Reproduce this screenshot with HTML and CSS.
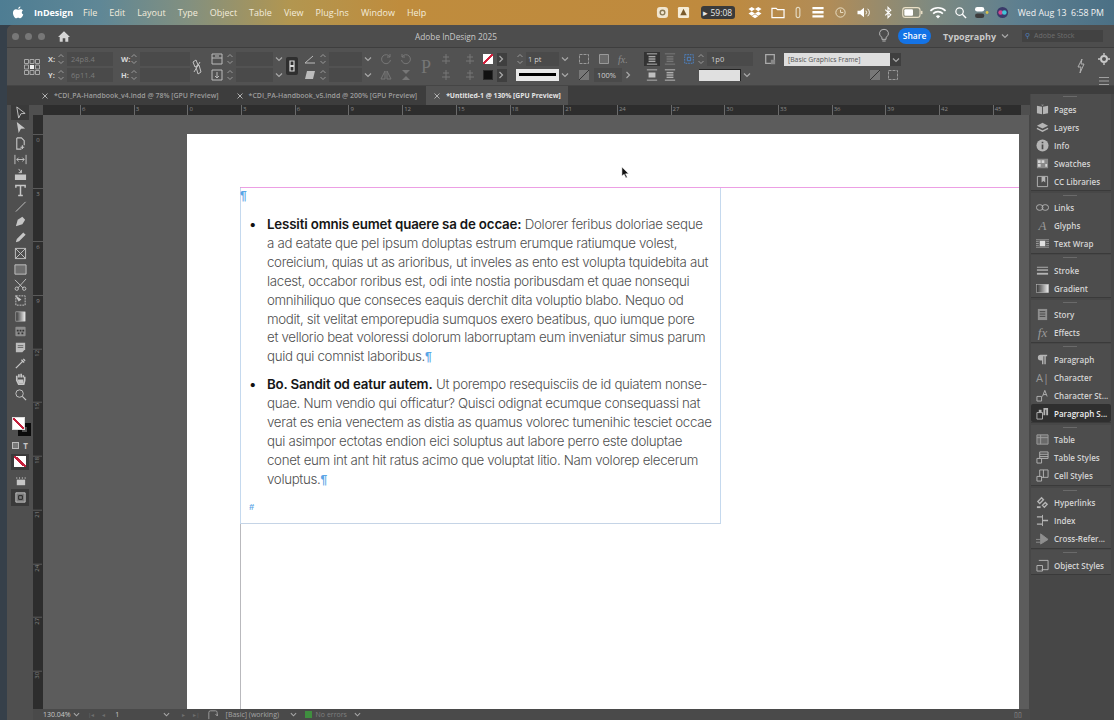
FILE: index.html
```html
<!DOCTYPE html>
<html lang="en">
<head>
    <meta charset="UTF-8" />
    <meta name="viewport" content="width=device-width, initial-scale=1.0" />
    <title>Adobe InDesign 2025</title>
    <link rel="stylesheet" href="styles.css">
</head>
<body>
    <svg class="sprite" width="0" height="0">
        <symbol id="spin" viewBox="0 0 8 14"><path d="M1.5 5 4 2.5 6.5 5M1.5 9 4 11.5 6.5 9" fill="none" stroke="currentColor"/></symbol>
        <symbol id="chev" viewBox="0 0 8 8"><path d="M1 2.5 4 5.5 7 2.5" fill="none" stroke="currentColor" stroke-width="1.2"/></symbol>
        <symbol id="next" viewBox="0 0 8 8"><path d="M2.5 1 5.5 4 2.5 7" fill="none" stroke="currentColor" stroke-width="1.2"/></symbol>
        <symbol id="close" viewBox="0 0 8 8"><path d="M1.5 1.5 6.5 6.5M6.5 1.5 1.5 6.5" stroke="currentColor"/></symbol>

        <symbol id="t-select" viewBox="0 0 14 14"><path d="M3 1 12 8 7.500 8.300 5 13Z" fill="none" stroke="currentColor"/></symbol>
        <symbol id="t-direct" viewBox="0 0 14 14"><path d="M3 1 12 8 7.500 8.300 5 13Z" fill="currentColor"/></symbol>
        <symbol id="t-page" viewBox="0 0 14 14"><path d="M3 1H8L11 4V9M3 1V13H8M9 9V13M7 11H11" fill="none" stroke="currentColor" stroke-width="1.200"/></symbol>
        <symbol id="t-gap" viewBox="0 0 14 14"><path d="M1 2V12M13 2V12M3 7H11M3 7 5 5M3 7 5 9M11 7 9 5M11 7 9 9" fill="none" stroke="currentColor"/></symbol>
        <symbol id="t-collect" viewBox="0 0 14 14"><path d="M1 7H13V13H1Z" fill="currentColor"/><path d="M5 1 8 5M8 2V5H5" fill="none" stroke="currentColor"/></symbol>
        <symbol id="t-type" viewBox="0 0 14 14"><path d="M2 4V1.500H12V4M7 1.500V12.500M4.500 12.500H9.500" fill="none" stroke="currentColor" stroke-width="1.600"/></symbol>
        <symbol id="t-line" viewBox="0 0 14 14"><path d="M2 12.500 12.500 2" stroke="currentColor"/></symbol>
        <symbol id="t-pen" viewBox="0 0 14 14"><path d="M2 12 4 5 9 2 12 5 9 10Z" fill="currentColor"/></symbol>
        <symbol id="t-pencil" viewBox="0 0 14 14"><path d="M2 12 3 8.500 10 1.500 12.500 4 5.500 11Z" fill="currentColor"/></symbol>
        <symbol id="t-frame" viewBox="0 0 14 14"><path d="M1.500 1.500H12.500V12.500H1.500ZM1.500 1.500 12.500 12.500M12.500 1.500 1.500 12.500" fill="none" stroke="currentColor"/></symbol>
        <symbol id="t-rect" viewBox="0 0 14 14"><path d="M1 2H13V12H1Z" fill="#6f6f6f" stroke="currentColor"/></symbol>
        <symbol id="t-scissors" viewBox="0 0 14 14"><path d="M1 2 10 11M13 1 4 11" stroke="currentColor"/><circle cx="3" cy="11.500" r="1.800" fill="none" stroke="currentColor"/><circle cx="11" cy="11.500" r="1.800" fill="none" stroke="currentColor"/></symbol>
        <symbol id="t-transform" viewBox="0 0 14 14"><path d="M2 2H12V12H2Z" fill="none" stroke="currentColor" stroke-dasharray="2 1"/><path d="M1 1 8 6 5 8Z" fill="currentColor"/></symbol>
        <symbol id="t-gradient" viewBox="0 0 14 14"><rect x="2" y="2" width="10" height="10" fill="url(#grad)" stroke="currentColor" stroke-width=".6"/></symbol>
        <linearGradient id="grad"><stop offset="0" stop-color="#333"/><stop offset="1" stop-color="#eee"/></linearGradient>
        <symbol id="t-feather" viewBox="0 0 14 14"><rect x="1.500" y="2" width="11" height="10" rx="1" fill="#8d8d8d"/><path d="M3 5h2v2H3zM6 5h2v2H6zM9 5h2v2H9zM4 8h2v2H4zM8 8h2v2H8z" fill="#333"/></symbol>
        <symbol id="t-note" viewBox="0 0 14 14"><path d="M2 2H12V9L9 12H2Z" fill="#bdbdbd"/><path d="M4 5H10M4 7H10" stroke="#666"/></symbol>
        <symbol id="t-drop" viewBox="0 0 14 14"><path d="M2 12 9 5M8 3 11 6M10 2 12 4" fill="none" stroke="currentColor" stroke-width="1.400"/></symbol>
        <symbol id="t-hand" viewBox="0 0 14 14"><path d="M3 7V4M5.300 6V2.500M7.700 6V2M10 6V3.500M3 7 3 9 5 13H10.500L11.500 9V5" fill="none" stroke="currentColor" stroke-width="1.800"/><path d="M4 8H10V12H5Z" fill="currentColor"/></symbol>
        <symbol id="t-zoom" viewBox="0 0 14 14"><circle cx="6" cy="6" r="4" fill="none" stroke="currentColor"/><path d="M9 9 13 13" stroke="currentColor" stroke-width="1.300"/></symbol>
        <symbol id="t-preview" viewBox="0 0 14 14"><path d="M3 5H12V11H3Z" fill="currentColor"/><path d="M3 2.500V4M6 2.500V4M9 2.500V4M12 2.500V4" stroke="currentColor"/></symbol>
        <symbol id="t-mode" viewBox="0 0 14 14"><path d="M2 2H12V12H2Z" fill="#7b7b7b" stroke="currentColor"/><path d="M5 5H9V9H5Z" fill="none" stroke="#222"/></symbol>

        <symbol id="p-pages" viewBox="0 0 14 12"><path d="M1 2 6.500 3V11L1 10ZM13 2 7.500 3V11L13 10ZM5.500 1 7 2 8.500 1" fill="currentColor"/></symbol>
        <symbol id="p-layers" viewBox="0 0 14 12"><path d="M7 1 13 4 7 7 1 4Z" fill="currentColor"/><path d="M1 7 7 10 13 7" fill="none" stroke="currentColor" stroke-width="1.500"/></symbol>
        <symbol id="p-info" viewBox="0 0 14 14"><circle cx="7" cy="7" r="6.500" fill="currentColor"/><path d="M7 6V11M7 3V4.500" stroke="#4a4a4a" stroke-width="1.800"/></symbol>
        <symbol id="p-swatches" viewBox="0 0 14 12"><path d="M1 1H13V11H1Z" fill="#8a8a8a"/><path d="M2 2.500H5V5.500H2ZM6 2.500H9V5.500H6ZM10 6.500H12V9.500H10ZM2 6.500H5V9.500H2Z" fill="#d5d5d5"/></symbol>
        <symbol id="p-cc" viewBox="0 0 14 14"><path d="M1.500 1.500H12.500V12.500H1.500Z" fill="none" stroke="currentColor"/><path d="M6 2H10V8L8 6.500 6 8Z" fill="currentColor"/></symbol>
        <symbol id="p-links" viewBox="0 0 14 8"><rect x=".5" y="1" width="7" height="6" rx="3" fill="none" stroke="currentColor"/><rect x="6.500" y="1" width="7" height="6" rx="3" fill="none" stroke="currentColor"/></symbol>
        <symbol id="p-wrap" viewBox="0 0 14 12"><path d="M0 2H14M0 10H14M0 6H3M11 6H14M0 4H3M11 4H14M0 8H3M11 8H14" stroke="#9a9a9a"/><path d="M4 3H10V9H4Z" fill="#e0e0e0"/></symbol>
        <symbol id="p-stroke" viewBox="0 0 14 10"><path d="M1 1.500H13" stroke="currentColor"/><path d="M1 4.500H13" stroke="currentColor" stroke-width="1.500"/><path d="M1 8.500H13" stroke="currentColor" stroke-width="2"/></symbol>
        <symbol id="p-gradient" viewBox="0 0 14 10"><rect x=".5" y=".5" width="13" height="9" fill="url(#grad)" stroke="#bdbdbd" stroke-width=".6"/></symbol>
        <symbol id="p-story" viewBox="0 0 14 14"><path d="M2 1H12V13H2Z" fill="#8e8e8e"/><path d="M4 4H10M4 6.500H10M4 9H10" stroke="#3f3f3f"/></symbol>
        <symbol id="p-para" viewBox="0 0 14 14"><path d="M5 2H12V3.500H10.500V12H9V3.500H8V12H6.500V8H5A3 3 0 0 1 5 2Z" fill="currentColor"/></symbol>
        <symbol id="p-cstyle" viewBox="0 0 14 14"><path d="M1 8H6V13H1Z" fill="none" stroke="currentColor"/><path d="M7 8 9.500 1.500 12 8M8 6H11" fill="none" stroke="currentColor"/></symbol>
        <symbol id="p-pstyle" viewBox="0 0 14 14"><path d="M1 6H7V13H1Z" fill="none" stroke="currentColor"/><path d="M3 3H6V6H3Z" fill="currentColor"/><path d="M8 1H13V9H11V3H10V9H8Z" fill="currentColor"/></symbol>
        <symbol id="p-table" viewBox="0 0 14 12"><path d="M1 1H13V11H1ZM1 4H13M5 1V11" fill="#6a6a6a" stroke="#9e9e9e"/></symbol>
        <symbol id="p-tstyle" viewBox="0 0 14 14"><path d="M4 1H13V8H4ZM4 3.500H13M4 6H13" fill="none" stroke="currentColor"/><path d="M1 8H6V13H1Z" fill="#4a4a4a" stroke="currentColor"/></symbol>
        <symbol id="p-cstyle2" viewBox="0 0 14 14"><path d="M4 1H13V9H4ZM8 1V9" fill="none" stroke="currentColor"/><path d="M1 8H6V13H1Z" fill="#4a4a4a" stroke="currentColor"/></symbol>
        <symbol id="p-hyper" viewBox="0 0 14 14"><path d="M2 6 6 2 8 4 4 8ZM7 10 10 7 12 9 9 12Z" fill="none" stroke="currentColor" stroke-width="1.500"/><path d="M1 11H5V13H1Z" fill="currentColor"/></symbol>
        <symbol id="p-index" viewBox="0 0 14 14"><path d="M1 3H7M7 7H13M1 11H7" stroke="currentColor" stroke-width="1.400"/><path d="M7 1V13" stroke="currentColor"/></symbol>
        <symbol id="p-cross" viewBox="0 0 14 14"><path d="M0 8H5M0 11H5M5 2 13 8 5 13Z" fill="#8f8f8f" stroke="#8f8f8f"/></symbol>
        <symbol id="p-object" viewBox="0 0 14 14"><path d="M3 1.500H13V11.500H6" fill="none" stroke="currentColor"/><path d="M1 7H7V13H1Z" fill="none" stroke="currentColor"/></symbol>

        <symbol id="c-proxy" viewBox="0 0 16 16"><path d="M.5.5h4v4h-4zM6 .5h4v4H6zM11.500.5h4v4h-4zM.5 6h4v4h-4zM11.500 6h4v4h-4zM.5 11.500h4v4h-4zM6 11.500h4v4H6zM11.500 11.500h4v4h-4z" fill="none" stroke="#a8a8a8"/><path d="M6 6h4v4H6z" fill="#eee"/></symbol>
        <symbol id="c-chain" viewBox="0 0 12 16"><path d="M2 3 5 1 7 6 4 8ZM5 8 8 6 10 13 7 15ZM3 13 9 3" fill="none" stroke="#c4c4c4"/></symbol>
        <symbol id="c-w" viewBox="0 0 12 12"><path d="M1 1H11V11H1ZM1 5H11M4 3H8" fill="none" stroke="#bbb"/></symbol>
        <symbol id="c-h" viewBox="0 0 12 12"><path d="M1 1H11V11H1ZM6 3V9M4 7 6 9 8 7" fill="none" stroke="#bbb"/></symbol>
        <symbol id="c-link" viewBox="0 0 8 12"><path d="M2 1H6V5.500H2ZM2 6.500H6V11H2Z" fill="none" stroke="#d8d8d8" stroke-width="1.200"/></symbol>
        <symbol id="c-angle" viewBox="0 0 12 12"><path d="M1 10H11M1 10 9 3" fill="none" stroke="#bbb"/></symbol>
        <symbol id="c-shear" viewBox="0 0 12 12"><path d="M3 2H11L9 10H1Z" fill="#bbb"/></symbol>
        <symbol id="c-rot" viewBox="0 0 12 12"><path d="M10 4A4.500 4.500 0 1 0 10.500 7M10 1V4H7" fill="none" stroke="#777"/></symbol>
        <symbol id="c-rot2" viewBox="0 0 12 12"><path d="M2 4A4.500 4.500 0 1 1 1.500 7M2 1V4H5" fill="none" stroke="#777"/></symbol>
        <symbol id="c-fliph" viewBox="0 0 12 12"><path d="M5 2 1 10H5ZM7 2 11 10H7Z" fill="none" stroke="#777"/></symbol>
        <symbol id="c-flipv" viewBox="0 0 12 12"><path d="M2 1H10L6 5ZM2 11H10L6 7Z" fill="#777"/></symbol>
        <symbol id="c-align" viewBox="0 0 12 12"><path d="M6 1V11M3 4H9M2 8H10" stroke="#777"/></symbol>
        <symbol id="c-frame" viewBox="0 0 12 12"><path d="M1.500 1.500H10.500V10.500H1.500Z" fill="none" stroke="#999" stroke-dasharray="3 1"/></symbol>
        <symbol id="c-frame2" viewBox="0 0 12 12"><path d="M1.500 1.500H10.500V10.500H1.500Z" fill="#6a6a6a" stroke="#999"/></symbol>
        <symbol id="c-lines" viewBox="0 0 14 14"><path d="M1 1H13M1 13H13M3 4H11M3 6H11M3 8H11M3 10H11" stroke="#c8c8c8"/></symbol>
        <symbol id="c-lines2" viewBox="0 0 14 14"><path d="M1 1H13M1 13H13M3 4H11M3 6H11M3 8H11M3 10H11" stroke="#7f7f7f"/></symbol>
        <symbol id="c-mid" viewBox="0 0 14 14"><path d="M1 1H13M1 13H13" stroke="#c0c0c0"/><path d="M3 4H11V10H3Z" fill="#c0c0c0"/></symbol>
        <symbol id="c-gutter" viewBox="0 0 14 14"><path d="M2 2H12V12H2Z" fill="none" stroke="#4c8ad6" stroke-dasharray="2 1"/><path d="M5 5H9V9H5Z" fill="none" stroke="#4c8ad6"/></symbol>
        <symbol id="c-fit" viewBox="0 0 12 12"><path d="M1 1H11V11H1Z" fill="#777"/><path d="M1 11 11 1" stroke="#333"/></symbol>
        <symbol id="c-style" viewBox="0 0 14 14"><path d="M2 2H12V12H2Z" fill="none" stroke="#aaa" stroke-width="1.500"/><path d="M8 8H13V13H8Z" fill="#888"/></symbol>
        <symbol id="c-bolt" viewBox="0 0 10 16"><path d="M6 1 2 9H5L4 15 8 6H5Z" fill="none" stroke="#b0b0b0"/></symbol>
        <symbol id="c-gear" viewBox="0 0 12 12"><circle cx="6" cy="6" r="3" fill="none" stroke="#c8c8c8" stroke-width="2"/><path d="M6 0V2M6 10V12M0 6H2M10 6H12" stroke="#c8c8c8" stroke-width="1.400"/></symbol>
        <symbol id="c-menu" viewBox="0 0 12 12"><path d="M1 2.500H11M1 6H11M1 9.500H11" stroke="#a0a0a0" stroke-width="1.200"/></symbol>

        <symbol id="m-apple" viewBox="0 0 14 16"><path d="M10 .5C10 2 8.800 3.500 7.200 3.500 7.200 2 8.500.7 10 .5ZM7.200 4.700C8 4.700 9 4 10.200 4 11.500 4 12.500 4.700 13 5.500 11 6.700 11.300 9.700 13.500 10.500 12.800 12.500 11.300 15 9.800 15 8.800 15 8.400 14.400 7.200 14.400 6 14.400 5.500 15 4.600 15 3 15 .8 11.500.8 8.500.8 5.700 2.600 4.100 4.400 4.100 5.500 4.100 6.400 4.700 7.200 4.700Z" fill="#fff"/></symbol>
        <symbol id="m-record" viewBox="0 0 14 14"><rect x="1" y="1" width="12" height="12" rx="3.500" fill="#f1e6d0"/><circle cx="7" cy="7" r="2.500" fill="none" stroke="#8a7a55" stroke-width="1.500"/></symbol>
        <symbol id="m-bell" viewBox="0 0 14 14"><rect x="1" y="1" width="12" height="12" rx="1.500" fill="#f6ecd6"/><path d="M7 3 10.500 10H3.500Z" fill="#7b5a2a"/></symbol>
        <symbol id="m-dropbox" viewBox="0 0 16 14"><path d="M4.500 1 8 3.300 4.500 5.600 1 3.300ZM11.500 1 15 3.300 11.500 5.600 8 3.300ZM4.500 5.800 8 8.100 4.500 10.400 1 8.100ZM11.500 5.800 15 8.100 11.500 10.400 8 8.100ZM4.600 11 8 8.900 11.400 11 8 13.200Z" fill="#fff"/></symbol>
        <symbol id="m-folder" viewBox="0 0 16 14"><path d="M1.500 2.500H6L7.500 4H14.500V12.500H1.500Z" fill="none" stroke="#fff" stroke-width="1.300"/></symbol>
        <symbol id="m-clip" viewBox="0 0 10 14"><path d="M3 3.500A2 2 0 0 1 7 3.500V10.500A2 2 0 0 1 3 10.500Z" fill="none" stroke="#e5dcc5" stroke-width="1.200"/></symbol>
        <symbol id="m-stack" viewBox="0 0 14 14"><path d="M1 1H13V3.500H1ZM1 5.500H13V8H1ZM1 10H13V12.500H1Z" fill="#fff"/></symbol>
        <symbol id="m-clock" viewBox="0 0 14 14"><circle cx="7" cy="7" r="5" fill="none" stroke="#ece2c9"/><path d="M7 4V7H10" fill="none" stroke="#ece2c9"/></symbol>
        <symbol id="m-sound" viewBox="0 0 16 14"><path d="M1 5H4L8 2V12L4 9H1Z" fill="#fff"/><path d="M10 5A3 3 0 0 1 10 9M12 3A6 6 0 0 1 12 11" fill="none" stroke="#fff"/></symbol>
        <symbol id="m-bt" viewBox="0 0 10 14"><path d="M2 4 8 9.500 5 12.500V1.500L8 4.500 2 10" fill="none" stroke="#fff" stroke-width="1.200"/></symbol>
        <symbol id="m-battery" viewBox="0 0 20 12"><rect x=".5" y="1.500" width="16" height="9" rx="2.500" fill="none" stroke="#e9dfc6"/><rect x="2" y="3" width="8" height="6" rx="1" fill="#fff"/><path d="M18 4.500V7.500" stroke="#e9dfc6" stroke-width="1.500"/></symbol>
        <symbol id="m-wifi" viewBox="0 0 16 12"><path d="M1 4.500A10 10 0 0 1 15 4.500M3.500 7A6.500 6.500 0 0 1 12.500 7" fill="none" stroke="#fff" stroke-width="1.500"/><path d="M6 9.500A3 3 0 0 1 10 9.500L8 11.500Z" fill="#fff"/></symbol>
        <symbol id="m-search" viewBox="0 0 14 14"><circle cx="6" cy="6" r="4" fill="none" stroke="#fff" stroke-width="1.300"/><path d="M9 9 13 13" stroke="#fff" stroke-width="1.500"/></symbol>
        <symbol id="m-control" viewBox="0 0 16 14"><rect x="1" y="1" width="10" height="5" rx="2.500" fill="#fff"/><rect x="1" y="8" width="10" height="5" rx="2.500" fill="#3d3d3d"/><circle cx="14" cy="7" r="1.500" fill="#d6c24a"/></symbol>
        <symbol id="m-siri" viewBox="0 0 14 14"><circle cx="7" cy="7" r="6" fill="#3a3a6a"/><circle cx="5" cy="7" r="2.500" fill="#d0468c"/><circle cx="9" cy="7" r="2.500" fill="#42c3d8"/></symbol>
    </svg>

    <div class="menubar">
        <svg class="apple"><use href="#m-apple"/></svg>
        <span class="app-name">InDesign</span>
        <span class="menu-item">File</span>
        <span class="menu-item">Edit</span>
        <span class="menu-item">Layout</span>
        <span class="menu-item">Type</span>
        <span class="menu-item">Object</span>
        <span class="menu-item">Table</span>
        <span class="menu-item">View</span>
        <span class="menu-item">Plug-Ins</span>
        <span class="menu-item">Window</span>
        <span class="menu-item">Help</span>
        <div class="status-icons">
            <svg class="st"><use href="#m-record"/></svg>
            <svg class="st"><use href="#m-bell"/></svg>
            <span class="rec-timer">▸ 59:08</span>
            <svg class="st w24"><use href="#m-dropbox"/></svg>
            <svg class="st w22"><use href="#m-folder"/></svg>
            <svg class="st w18"><use href="#m-clip"/></svg>
            <svg class="st w22"><use href="#m-stack"/></svg>
            <svg class="st w23"><use href="#m-clock"/></svg>
            <svg class="st w24"><use href="#m-sound"/></svg>
            <svg class="st w24"><use href="#m-bt"/></svg>
            <svg class="st w26"><use href="#m-battery"/></svg>
            <svg class="st w24"><use href="#m-wifi"/></svg>
            <svg class="st"><use href="#m-search"/></svg>
            <svg class="st"><use href="#m-control"/></svg>
            <svg class="st"><use href="#m-siri"/></svg>
            <span class="clock">Wed Aug 13&nbsp; 6:58 PM</span>
        </div>
    </div>

    <div class="window">
        <div class="titlebar">
            <div class="traffic"><i></i><i></i><i></i></div>
            <svg class="home" viewBox="0 0 14 12"><path d="M7 0 14 6.500H12V12H8.500V8H5.500V12H2V6.500H0Z" fill="#d5d5d5"/></svg>
            <div class="title">Adobe InDesign 2025</div>
            <svg class="bulb" viewBox="0 0 12 18"><path d="M6 1A5 5 0 0 0 3.500 10.500V13H8.500V10.500A5 5 0 0 0 6 1ZM4 15H8" fill="none" stroke="#c9c9c9"/></svg>
            <span class="share">Share</span>
            <span class="workspace">Typography</span>
            <svg class="ws-chev"><use href="#chev"/></svg>
            <div class="stock"><span class="stock-icon">⚲</span>Adobe Stock</div>
        </div>

        <div class="control-panel">
            <div class="g g-proxy"><svg class="proxy"><use href="#c-proxy"/></svg></div>
            <div class="g g-xy">
                <div class="r"><b>X:</b><svg class="spin"><use href="#spin"/></svg><span class="val dim">24p8.4</span></div>
                <div class="r"><b>Y:</b><svg class="spin"><use href="#spin"/></svg><span class="val dim">6p11.4</span></div>
            </div>
            <div class="g g-wh">
                <div class="r"><b>W:</b><svg class="spin"><use href="#spin"/></svg><span class="val"></span></div>
                <div class="r"><b>H:</b><svg class="spin"><use href="#spin"/></svg><span class="val"></span></div>
            </div>
            <div class="g g-chain"><svg class="chain"><use href="#c-chain"/></svg></div>
            <div class="g g-scale">
                <div class="r"><svg class="ic"><use href="#c-w"/></svg><svg class="spin"><use href="#spin"/></svg><span class="val"></span><svg class="chv"><use href="#chev"/></svg></div>
                <div class="r"><svg class="ic"><use href="#c-h"/></svg><svg class="spin"><use href="#spin"/></svg><span class="val"></span><svg class="chv"><use href="#chev"/></svg></div>
            </div>
            <div class="g g-link"><span class="link-btn"><svg><use href="#c-link"/></svg></span></div>
            <div class="g g-rot">
                <div class="r"><svg class="ic"><use href="#c-angle"/></svg><svg class="spin"><use href="#spin"/></svg><span class="val"></span><svg class="chv"><use href="#chev"/></svg></div>
                <div class="r"><svg class="ic"><use href="#c-shear"/></svg><svg class="spin"><use href="#spin"/></svg><span class="val"></span><svg class="chv"><use href="#chev"/></svg></div>
            </div>
            <div class="g g-icons2">
                <div class="r"><svg class="ic"><use href="#c-rot"/></svg><svg class="ic"><use href="#c-rot2"/></svg></div>
                <div class="r"><svg class="ic"><use href="#c-fliph"/></svg><svg class="ic"><use href="#c-flipv"/></svg></div>
            </div>
            <div class="g g-p"><span class="big-p">P</span></div>
            <div class="g g-icons3">
                <div class="r"><svg class="ic"><use href="#c-align"/></svg><svg class="ic"><use href="#c-align"/></svg></div>
                <div class="r"><svg class="ic"><use href="#c-align"/></svg><svg class="ic"><use href="#c-align"/></svg></div>
            </div>
            <div class="g g-swatch">
                <div class="r"><span class="swatch-none"></span><span class="next-btn"><svg><use href="#next"/></svg></span></div>
                <div class="r"><span class="swatch-black"></span><span class="next-btn"><svg><use href="#next"/></svg></span></div>
            </div>
            <div class="g g-stroke">
                <div class="r"><svg class="spin"><use href="#spin"/></svg><span class="val light">1 pt</span><svg class="chv"><use href="#chev"/></svg></div>
                <div class="r"><span class="stroke-sample"><i></i></span><svg class="chv"><use href="#chev"/></svg></div>
            </div>
            <div class="g g-frames">
                <div class="r"><svg class="ic"><use href="#c-frame"/></svg><svg class="ic"><use href="#c-frame2"/></svg><span class="fx">fx.</span></div>
                <div class="r"><svg class="ic"><use href="#c-fit"/></svg><span class="pct">100%</span><svg class="chv"><use href="#next"/></svg></div>
            </div>
            <div class="g g-align">
                <div class="r"><span class="on"><svg class="ic"><use href="#c-lines"/></svg></span><svg class="ic"><use href="#c-lines2"/></svg></div>
                <div class="r"><svg class="ic"><use href="#c-mid"/></svg><svg class="ic"><use href="#c-lines"/></svg></div>
            </div>
            <div class="g g-gap">
                <div class="r"><svg class="ic"><use href="#c-gutter"/></svg><svg class="spin"><use href="#spin"/></svg><span class="val light">1p0</span></div>
                <div class="r r-box"><span class="corner-box"></span><svg class="chv"><use href="#chev"/></svg></div>
            </div>
            <div class="g g-style">
                <div class="r"><svg class="ic"><use href="#c-style"/></svg><span class="style-field">[Basic Graphics Frame]</span><span class="style-chev"><svg class="chv"><use href="#chev"/></svg></span></div>
                <div class="r r-end"><svg class="ic"><use href="#c-fit"/></svg><svg class="ic"><use href="#c-frame"/></svg></div>
            </div>
            <div class="g g-end">
                <svg class="bolt"><use href="#c-bolt"/></svg>
                <div class="end-col">
                    <svg class="ic"><use href="#c-gear"/></svg>
                    <svg class="ic"><use href="#c-menu"/></svg>
                </div>
            </div>
        </div>

        <div class="tabbar">
            <div class="tab"><svg class="tab-x"><use href="#close"/></svg>*CDI_PA-Handbook_v4.indd @ 78% [GPU Preview]</div>
            <div class="tab"><svg class="tab-x"><use href="#close"/></svg>*CDI_PA-Handbook_v5.indd @ 200% [GPU Preview]</div>
            <div class="tab tab-active"><svg class="tab-x"><use href="#close"/></svg>*Untitled-1 @ 130% [GPU Preview]</div>
        </div>

        <div class="workspace-area">
            <div class="toolbar">
                <span class="tool tool-on"><svg><use href="#t-select"/></svg></span>
                <span class="tool"><svg><use href="#t-direct"/></svg></span>
                <span class="tool"><svg><use href="#t-page"/></svg></span>
                <span class="tool"><svg><use href="#t-gap"/></svg></span>
                <span class="tool"><svg><use href="#t-collect"/></svg></span>
                <span class="tool"><svg><use href="#t-type"/></svg></span>
                <span class="tool"><svg><use href="#t-line"/></svg></span>
                <span class="tool"><svg><use href="#t-pen"/></svg></span>
                <span class="tool"><svg><use href="#t-pencil"/></svg></span>
                <span class="tool"><svg><use href="#t-frame"/></svg></span>
                <span class="tool"><svg><use href="#t-rect"/></svg></span>
                <span class="tool"><svg><use href="#t-scissors"/></svg></span>
                <span class="tool"><svg><use href="#t-transform"/></svg></span>
                <span class="tool"><svg><use href="#t-gradient"/></svg></span>
                <span class="tool"><svg><use href="#t-feather"/></svg></span>
                <span class="tool"><svg><use href="#t-note"/></svg></span>
                <span class="tool"><svg><use href="#t-drop"/></svg></span>
                <span class="tool"><svg><use href="#t-hand"/></svg></span>
                <span class="tool"><svg><use href="#t-zoom"/></svg></span>
                <div class="fill-stroke">
                    <span class="fs-stroke"></span>
                    <span class="fs-fill"></span>
                </div>
                <div class="fs-mode"><i></i><span>T</span></div>
                <span class="apply-none"><i></i></span>
                <span class="tool tool-preview"><svg><use href="#t-preview"/></svg></span>
                <span class="tool tool-on tool-last"><svg><use href="#t-mode"/></svg></span>
            </div>

            <div class="doc-column">
                <div class="ruler-h">
                    <span>6</span><span>3</span><span>0</span><span>3</span><span>6</span><span>9</span><span>12</span><span>15</span><span>18</span><span>21</span><span>24</span><span>27</span><span>30</span><span>33</span><span>36</span><span>39</span><span>42</span><span>45</span>
                </div>
                <div class="doc-row">
                    <div class="ruler-v">
                        <span>0</span><span>3</span><span>6</span><span>9</span><span class="rot">12</span><span class="rot">15</span><span class="rot">18</span><span class="rot">21</span><span class="rot">24</span><span class="rot">27</span><span class="rot">30</span>
                    </div>
                    <div class="pasteboard">
                        <div class="page">
                            <div class="margins">
                                <div class="frame">
                                    <span class="pil pil-first">¶</span>
                                    <div class="bullet-para">
                                        <span class="bullet">•</span>
                                        <div class="lines">
                                            <span class="line"><b>Lessiti omnis eumet quaere sa de occae:</b> Dolorer feribus doloriae seque</span>
                                            <span class="line">a ad eatate que pel ipsum doluptas estrum erumque ratiumque volest,</span>
                                            <span class="line">coreicium, quias ut as arioribus, ut inveles as ento est volupta tquidebita aut</span>
                                            <span class="line">lacest, occabor roribus est, odi inte nostia poribusdam et quae nonsequi</span>
                                            <span class="line">omnihiliquo que conseces eaquis derchit dita voluptio blabo. Nequo od</span>
                                            <span class="line">modit, sit velitat emporepudia sumquos exero beatibus, quo iumque pore</span>
                                            <span class="line">et vellorio beat voloressi dolorum laborruptam eum inveniatur simus parum</span>
                                            <span class="line">quid qui comnist laboribus.<span class="pil">¶</span></span>
                                        </div>
                                    </div>
                                    <div class="bullet-para">
                                        <span class="bullet">•</span>
                                        <div class="lines">
                                            <span class="line"><b>Bo. Sandit od eatur autem.</b> Ut porempo resequisciis de id quiatem nonse-</span>
                                            <span class="line">quae. Num vendio qui officatur? Quisci odignat ecumque consequassi nat</span>
                                            <span class="line">verat es enia venectem as distia as quamus volorec tumenihic tesciet occae</span>
                                            <span class="line">qui asimpor ectotas endion eici soluptus aut labore perro este doluptae</span>
                                            <span class="line">conet eum int ant hit ratus acimo que voluptat litio. Nam volorep elecerum</span>
                                            <span class="line">voluptus.<span class="pil">¶</span></span>
                                        </div>
                                    </div>
                                    <span class="pil pil-end">#</span>
                                </div>
                            </div>
                        </div>
                        <svg class="cursor" viewBox="0 0 10 14"><path d="M1 1 1 11 3.500 9 5.500 13 7 12.300 5 8.500 8.500 8.300Z" fill="#111" stroke="#fff" stroke-width=".6"/></svg>
                    </div>
                    <div class="panel-gap"></div>
                </div>
                <div class="statusbar">
                    <span class="zoom-val">130.04%</span>
                    <svg class="chv"><use href="#chev"/></svg>
                    <span class="nav">|◂</span><span class="nav">◂</span>
                    <span class="page-no">1</span>
                    <svg class="chv"><use href="#chev"/></svg>
                    <span class="nav nav-next">▸</span><span class="nav">▸|</span>
                    <svg class="bar-icon" viewBox="0 0 12 12"><path d="M1 11V3A2 2 0 0 1 3 1H9A2 2 0 0 1 11 3V7M11 7 9 5M11 7 12 5" fill="none" stroke="#aaa"/></svg>
                    <span class="profile">[Basic] (working)</span>
                    <svg class="chv"><use href="#chev"/></svg>
                    <i class="ok-dot"></i>
                    <span class="errors">No errors</span>
                    <svg class="chv"><use href="#chev"/></svg>
                    <span class="bar-right">▯▯</span>
                </div>
            </div>

            <div class="dock">
                <div class="dock-group">
                    <div class="dock-item"><svg><use href="#p-pages"/></svg>Pages</div>
                    <div class="dock-item"><svg><use href="#p-layers"/></svg>Layers</div>
                    <div class="dock-item"><svg><use href="#p-info"/></svg>Info</div>
                    <div class="dock-item"><svg><use href="#p-swatches"/></svg>Swatches</div>
                    <div class="dock-item"><svg><use href="#p-cc"/></svg>CC Libraries</div>
                </div>
                <div class="dock-group">
                    <div class="dock-item"><svg><use href="#p-links"/></svg>Links</div>
                    <div class="dock-item"><span class="dock-glyph">A</span>Glyphs</div>
                    <div class="dock-item"><svg><use href="#p-wrap"/></svg>Text Wrap</div>
                </div>
                <div class="dock-group">
                    <div class="dock-item"><svg><use href="#p-stroke"/></svg>Stroke</div>
                    <div class="dock-item"><svg><use href="#p-gradient"/></svg>Gradient</div>
                </div>
                <div class="dock-group">
                    <div class="dock-item"><svg><use href="#p-story"/></svg>Story</div>
                    <div class="dock-item"><span class="dock-glyph">fx</span>Effects</div>
                </div>
                <div class="dock-group">
                    <div class="dock-item"><svg><use href="#p-para"/></svg>Paragraph</div>
                    <div class="dock-item"><span class="dock-glyph dock-sans">A|</span>Character</div>
                    <div class="dock-item"><svg><use href="#p-cstyle"/></svg>Character St...</div>
                    <div class="dock-item dock-on"><svg><use href="#p-pstyle"/></svg>Paragraph S...</div>
                </div>
                <div class="dock-group">
                    <div class="dock-item"><svg><use href="#p-table"/></svg>Table</div>
                    <div class="dock-item"><svg><use href="#p-tstyle"/></svg>Table Styles</div>
                    <div class="dock-item"><svg><use href="#p-cstyle2"/></svg>Cell Styles</div>
                </div>
                <div class="dock-group">
                    <div class="dock-item"><svg><use href="#p-hyper"/></svg>Hyperlinks</div>
                    <div class="dock-item"><svg><use href="#p-index"/></svg>Index</div>
                    <div class="dock-item"><svg><use href="#p-cross"/></svg>Cross-Refer...</div>
                </div>
                <div class="dock-group">
                    <div class="dock-item"><svg><use href="#p-object"/></svg>Object Styles</div>
                </div>
            </div>
        </div>
    </div>
</body>
</html>
```

FILE: styles.css
```css
* {
    margin: 0;
    padding: 0;
    box-sizing: border-box;
}

html, body {
    height: 720px;
    overflow: hidden;
}

body {
    font-family: "Open Sans", sans-serif;
    background: #36404a;
    color: #d0d0d0;
    display: flex;
    flex-direction: column;
}

.sprite {
    position: absolute;
}

svg {
    display: block;
    flex: none;
}

/* mac menu bar */
.menubar {
    height: 25px;
    flex: none;
    display: flex;
    align-items: center;
    padding-left: 12px;
    font-size: 9px;
    color: #f3ecdc;
    background: linear-gradient(90deg, #4e7d93 0, #5f8796 100px, #83907f 190px, #b29650 290px, #bf8c3d 400px, #bf8a3e 720px, #b08c58 830px, #7f8a80 930px, #5d7f90 1020px, #4b7085 1114px);
}

.apple {
    width: 12px;
    height: 13px;
    margin-right: 10px;
}

.app-name {
    font-weight: 700;
    color: #fff;
    margin-right: 10px;
}

.menu-item {
    margin-right: 12px;
}

.status-icons {
    margin-left: auto;
    display: flex;
    align-items: center;
    padding-right: 10px;
}

.st {
    width: 21px;
    height: 13px;
}

.w18 { width: 18px; }
.w22 { width: 22px; }
.w23 { width: 23px; }
.w24 { width: 24px; }
.w26 { width: 26px; }

.rec-timer {
    width: 34px;
    height: 13px;
    margin: 0 8px 0 7px;
    border-radius: 3px;
    background: #3a3a3a;
    color: #e8e8e8;
    font-size: 8.500px;
    line-height: 13px;
    text-align: center;
    white-space: nowrap;
}

.clock {
    margin-left: 5px;
    font-size: 8.800px;
    color: #f2f2f2;
    white-space: nowrap;
}

/* app window */
.window {
    flex: 1;
    min-height: 0;
    margin-left: 7px;
    display: flex;
    flex-direction: column;
    border-top-left-radius: 6px;
    overflow: hidden;
    background: #4f4f4f;
}

.titlebar {
    height: 23px;
    flex: none;
    display: flex;
    align-items: center;
    position: relative;
    background: #4d4d4d;
    border-bottom: 1px solid #3e3e3e;
}

.traffic {
    display: flex;
    gap: 6px;
    margin-left: 5px;
}

.traffic i {
    width: 7px;
    height: 7px;
    border-radius: 50%;
    background: #777777;
}

.home {
    width: 12px;
    height: 11px;
    margin-left: 13px;
}

.title {
    position: absolute;
    left: 408px;
    font-size: 8.300px;
    color: #c8c8c8;
}

.bulb {
    width: 10px;
    height: 16px;
    margin-left: auto;
}

.share {
    width: 33px;
    height: 16px;
    margin-left: 9px;
    border-radius: 8px;
    background: #1473e6;
    color: #fff;
    font-size: 8.500px;
    font-weight: 600;
    line-height: 16px;
    text-align: center;
}

.workspace {
    margin-left: 12px;
    font-size: 9px;
    font-weight: 700;
    color: #c9c9c9;
}

.ws-chev {
    width: 8px;
    height: 8px;
    margin-left: 5px;
    color: #aaa;
}

.stock {
    width: 81px;
    height: 12px;
    margin: 0 11px 0 13px;
    background: #424242;
    color: #6f6f6f;
    font-size: 7px;
    line-height: 12px;
    white-space: nowrap;
}

.stock-icon {
    color: #4f7fb8;
    margin: 0 4px 0 3px;
}

/* control panel */
.control-panel {
    height: 38px;
    flex: none;
    display: flex;
    padding-top: 3px;
    background: #525252;
    border-bottom: 1px solid #454545;
    font-size: 7.500px;
}

.g {
    flex: none;
    display: flex;
    flex-direction: column;
}

.r {
    height: 16px;
    display: flex;
    align-items: center;
}

.r b {
    width: 9px;
    font-size: 7.500px;
    color: #d8d8d8;
}

.val {
    flex: 1;
    height: 14px;
    line-height: 14px;
    padding-left: 4px;
    background: #4a4a4a;
    white-space: nowrap;
}

.dim {
    color: #7b7b7b;
}

.light {
    color: #d0d0d0;
}

.spin {
    width: 8px;
    height: 14px;
    color: #999;
    margin-right: 2px;
}

.chv {
    width: 8px;
    height: 8px;
    margin-left: 2px;
    color: #a8a8a8;
}

.ic {
    width: 12px;
    height: 12px;
}

.g-proxy { width: 16px; margin-left: 17px; padding-top: 8px; }
.proxy { width: 16px; height: 16px; }
.g-xy { width: 65px; margin-left: 8px; }
.g-wh { width: 69px; margin-left: 8px; }
.g-chain { width: 12px; margin-left: 1px; padding-top: 8px; }
.chain { width: 12px; height: 16px; }
.g-scale { width: 72px; margin-left: 8px; }
.g-scale .ic, .g-rot .ic { margin-right: 3px; }
.g-link { width: 12px; margin-left: 3px; padding-top: 6px; }
.g-rot { width: 68px; margin-left: 6px; }
.g-icons2 { width: 32px; margin-left: 8px; }
.g-icons2 .r, .g-icons3 .r, .g-align .r { justify-content: space-between; }
.g-p { width: 20px; margin-left: 4px; padding-top: 5px; }
.g-icons3 { width: 36px; margin-left: 4px; }
.g-swatch { width: 27px; margin-left: 7px; }
.g-stroke { width: 57px; margin-left: 4px; padding-left: 2px; }
.g-frames { width: 54px; margin-left: 7px; }
.g-frames .r .ic { margin-right: 8px; }
.g-align { width: 30px; margin-left: 14px; }
.g-gap { width: 70px; margin-left: 7px; }
.g-gap .ic { margin-right: 2px; }
.r-box { padding-left: 16px; }
.g-style { width: 138px; margin-left: 11px; }
.g-style .r .ic { margin-right: 8px; }
.r-end { justify-content: flex-end; padding-right: 3px; }
.g-style .r-end .ic { margin: 0 0 0 6px; }
.g-end { flex-direction: row; margin-left: auto; padding-right: 4px; gap: 12px; }
.bolt { width: 10px; height: 16px; margin-top: 7px; }
.end-col { display: flex; flex-direction: column; gap: 10px; padding-top: 2px; }

.link-btn {
    width: 12px;
    height: 18px;
    display: flex;
    align-items: center;
    justify-content: center;
    background: #2f2f2f;
    border-radius: 2px;
}

.link-btn svg {
    width: 8px;
    height: 12px;
}

.big-p {
    font-family: "Liberation Serif", serif;
    font-size: 18px;
    line-height: 22px;
    color: #767676;
    text-align: center;
}

.swatch-none {
    width: 10px;
    height: 10px;
    background: linear-gradient(to top left, #fff 44%, #d4213d 44%, #d4213d 56%, #fff 56%);
}

.swatch-black {
    width: 10px;
    height: 10px;
    background: #111;
    border: 1px solid #2a2a2a;
}

.next-btn {
    width: 10px;
    height: 13px;
    margin-left: 4px;
    padding-top: 2px;
    background: #3f3f3f;
    color: #aaa;
}

.next-btn svg {
    width: 8px;
    height: 8px;
}

.stroke-sample {
    width: 43px;
    height: 12px;
    padding: 2px 3px;
    background: #e8e8e8;
}

.stroke-sample i {
    display: block;
    height: 3px;
    margin-top: 2px;
    background: #000;
}

.g-stroke .val {
    padding-left: 2px;
    flex: none;
    width: 33px;
}

.fx {
    color: #8a8a8a;
    font-family: "Liberation Serif", serif;
    font-style: italic;
    font-size: 10px;
}

.pct {
    width: 33px;
    height: 14px;
    margin-left: -4px;
    padding-left: 3px;
    line-height: 14px;
    background: #4a4a4a;
    color: #cfcfcf;
}

.on {
    display: flex;
    padding: 1px 2px;
    margin-left: -2px;
    background: #333;
}

.corner-box {
    width: 42px;
    height: 12px;
    background: #e0e0e0;
    border-top: 1px solid #222;
    border-right: 1px solid #222;
}

.style-field {
    width: 106px;
    height: 13px;
    padding-left: 4px;
    background: #dedede;
    color: #555;
    font-size: 6.800px;
    line-height: 13px;
    white-space: nowrap;
}

.style-chev {
    width: 11px;
    height: 13px;
    padding-top: 3px;
    background: #3f3f3f;
}

.style-chev .chv {
    margin-left: 1.500px;
}

/* document tabs */
.tabbar {
    height: 19px;
    flex: none;
    display: flex;
    padding-left: 31px;
    background: #3d3d3d;
    font-size: 6.950px;
    font-weight: 600;
    color: #9c9c9c;
}

.tab {
    display: flex;
    align-items: center;
    white-space: nowrap;
    padding: 0 7px 0 3px;
    margin-right: 7px;
}

.tab-x {
    width: 8px;
    height: 8px;
    margin-right: 5px;
    color: #b0b0b0;
}

.tab-active {
    width: 142px;
    padding-left: 7px;
    margin: 0 0 0 -5px;
    background: #525252;
    color: #e4e4e4;
    font-size: 6.800px;
    font-weight: 700;
}

/* main area */
.workspace-area {
    flex: 1;
    min-height: 0;
    display: flex;
}

.toolbar {
    width: 26px;
    flex: none;
    display: flex;
    flex-direction: column;
    align-items: center;
    background: #4f4f4f;
    color: #c6c6c6;
}

.tool {
    width: 18px;
    height: 15.700px;
    flex: none;
    display: flex;
    align-items: center;
    justify-content: center;
}

.tool svg {
    width: 13px;
    height: 13px;
}

.tool-on {
    background: #3a3a3a;
    height: 15px;
}

.tool-preview {
    margin-top: 3px;
}

.tool-last {
    height: 17px;
}

.fill-stroke {
    width: 22px;
    height: 26px;
    flex: none;
    margin-top: 15px;
    position: relative;
}

.fs-fill {
    position: absolute;
    left: 3px;
    top: 0;
    width: 13px;
    height: 13px;
    background: linear-gradient(to top right, #fff 44%, #c4203c 44%, #c4203c 56%, #fff 56%);
    border: 1px solid #ddd;
}

.fs-stroke {
    position: absolute;
    left: 9px;
    top: 6px;
    width: 13px;
    height: 13px;
    border: 4px solid #0b0b0b;
}

.fs-mode {
    width: 22px;
    height: 12px;
    flex: none;
    margin-top: -4px;
    display: flex;
    align-items: center;
    justify-content: center;
    gap: 4px;
    font-size: 8px;
    font-weight: 700;
}

.fs-mode i {
    width: 7px;
    height: 7px;
    border: 1px solid #bbb;
    background: #777;
}

.apply-none {
    width: 18px;
    height: 16px;
    flex: none;
    margin-top: 3px;
    padding: 2px 3px;
    background: #3a3a3a;
}

.apply-none i {
    display: block;
    width: 12px;
    height: 11px;
    background: linear-gradient(to top right, #fff 42%, #c4203c 42%, #c4203c 58%, #fff 58%);
}

.doc-column {
    flex: 1;
    min-width: 0;
    display: flex;
    flex-direction: column;
}

.ruler-h {
    height: 10px;
    flex: none;
    display: flex;
    margin-left: 10px;
    padding-left: 37px;
    margin-right: 9px;
    overflow: hidden;
    background: #2d2d2d;
    font-size: 6px;
    color: #8a8a8a;
}

.ruler-h span {
    width: 53.700px;
    flex: none;
    line-height: 9px;
    padding-left: 1px;
    background: #2d2d2d;
    border-left: 1px solid #6a6a6a;
}

.doc-row {
    flex: 1;
    min-height: 0;
    display: flex;
}

.ruler-v {
    width: 10px;
    flex: none;
    padding-top: 19px;
    overflow: hidden;
    background: #2d2d2d;
    font-size: 6px;
    color: #8a8a8a;
}

.ruler-v span {
    display: block;
    height: 53.700px;
    padding-top: 1px;
    text-align: center;
    border-top: 1px solid #5a5a5a;
}

.ruler-v .rot {
    writing-mode: vertical-rl;
    transform: rotate(180deg);
    border: 0;
    border-bottom: 1px solid #5a5a5a;
    text-align: end;
    line-height: 9px;
}

.pasteboard {
    flex: 1;
    min-width: 0;
    position: relative;
    overflow: hidden;
    padding: 19px 0 0 144px;
    background: #5c5c5c;
}

.panel-gap {
    width: 1px;
    flex: none;
    background: #474747;
}

/* the page */
.page {
    width: 832px;
    height: 100%;
    padding: 53px 0 0 53px;
    background: #fff;
    font-family: Inter, "Liberation Sans", sans-serif;
}

.margins {
    height: 100%;
    border-top: 1px solid #ec9fe4;
    border-left: 1px solid #b9b9bd;
}

.frame {
    width: 480px;
    height: 336px;
    padding-left: 8px;
    border-right: 1px solid #c5d9ee;
    border-bottom: 1px solid #c5d4e6;
    box-shadow: -1px 0 0 #c5d9ee;
    position: relative;
    font-size: 13.300px;
    font-weight: 300;
    letter-spacing: -0.32px;
    line-height: 18.900px;
    color: #505050;
}

.frame b {
    font-weight: 600;
    letter-spacing: -0.16px;
    color: #161616;
}

.pil {
    color: #5aa5e6;
    font-size: 12px;
    font-family: "Liberation Sans", sans-serif;
    font-weight: 700;
}

.pil-first {
    position: absolute;
    left: -1px;
    top: -1px;
}

.pil-end {
    position: absolute;
    left: 8px;
    top: 310px;
    font-size: 9px;
    font-style: italic;
}

.bullet-para {
    display: flex;
    margin-bottom: 8px;
}

.bullet-para:first-of-type {
    padding-top: 27px;
}

.bullet {
    width: 18px;
    flex: none;
    color: #111;
    font-weight: 400;
}

.line {
    display: block;
    white-space: nowrap;
}

.cursor {
    position: absolute;
    left: 578px;
    top: 51px;
    width: 9px;
    height: 13px;
}

/* bottom status bar */
.statusbar {
    height: 11px;
    flex: none;
    display: flex;
    align-items: center;
    padding-left: 10px;
    background: #4a4a4a;
    font-size: 7px;
    color: #a4a4a4;
    white-space: nowrap;
}

.statusbar .chv {
    width: 7px;
    height: 7px;
}

.zoom-val {
    color: #c8c8c8;
    width: 28px;
}

.nav {
    margin-left: 8px;
    color: #6f6f6f;
    font-size: 6px;
}

.nav-next {
    margin-left: 12px;
}

.page-no {
    width: 46px;
    margin-left: 10px;
    color: #c8c8c8;
}

.bar-icon {
    width: 10px;
    height: 10px;
    margin-left: 8px;
}

.profile {
    width: 62px;
    margin-left: 8px;
}

.ok-dot {
    width: 7px;
    height: 7px;
    margin-left: 8px;
    background: #3f8f3f;
}

.errors {
    width: 36px;
    margin-left: 4px;
    color: #7f7f7f;
}

.bar-right {
    margin-left: auto;
    margin-right: 8px;
    color: #999;
}

/* right panel dock */
.dock {
    width: 84px;
    flex: none;
    margin-top: -11px;
    position: relative;
    padding: 0 3px 0 1px;
    background: #474747;
    font-size: 8px;
    font-weight: 600;
    color: #d4d4d4;
}

.dock-group {
    padding-top: 6px;
    margin-bottom: 1.600px;
    background: #4d4d4d;
    border-bottom: 1px solid #3a3a3a;
    position: relative;
}

.dock-group::before {
    content: '';
    position: absolute;
    top: 2px;
    left: 32px;
    width: 14px;
    height: 1px;
    background: #6a6a6a;
}

.dock-item {
    height: 18px;
    display: flex;
    align-items: center;
    white-space: nowrap;
    padding-left: 5px;
    color: #d4d4d4;
}

.dock-item svg {
    width: 13px;
    height: 13px;
    margin-right: 5px;
    color: #b4b4b4;
}

.dock-glyph {
    width: 13px;
    margin-right: 5px;
    font-family: "Liberation Serif", serif;
    font-style: italic;
    font-size: 13px;
    font-weight: 400;
    color: #999;
    text-align: center;
}

.dock-sans {
    font-family: "Open Sans", sans-serif;
    font-style: normal;
    font-size: 11px;
    white-space: nowrap;
}

.dock-on {
    background: #2f2f2f;
    border-radius: 2px;
    color: #eee;
}
```
